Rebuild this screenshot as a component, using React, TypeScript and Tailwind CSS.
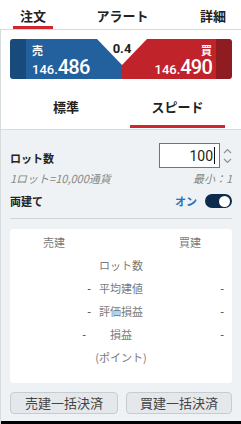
import React from "react";

const jp = "font-['Noto_Sans_CJK_JP',sans-serif]";
const num = "font-['Roboto','Noto_Sans_CJK_JP',sans-serif]";

function Chevron({ up }: { up?: boolean }) {
  return (
    <svg width="9" height="6" viewBox="0 0 9 6" fill="none">
      <path
        d={up ? "M1 5 L4.5 1.5 L8 5" : "M1 1 L4.5 4.5 L8 1"}
        stroke="#8a8f94"
        strokeWidth="1.1"
      />
    </svg>
  );
}

export default function App() {
  return (
    <div className={`w-[241px] h-[424px] bg-white overflow-hidden flex flex-col ${jp}`}>
      {/* Top tabs */}
      <div className="flex h-[30px] border-b border-[#d6dbde] shrink-0">
        <div className="ml-[13px] w-[40px] h-[29px] pt-[6px] border-b-[3px] border-[#d0262d] flex items-center justify-center text-[13px] font-bold text-[#222]">
          注文
        </div>
        <div className="ml-[45px] w-[49px] h-[29px] pt-[6px] border-b-[3px] border-transparent flex items-center justify-center text-[13px] font-bold text-[#222] whitespace-nowrap">
          アラート
        </div>
        <div className="ml-[53px] w-[26px] h-[29px] pt-[6px] border-b-[3px] border-transparent flex items-center justify-center text-[13px] font-bold text-[#222] whitespace-nowrap">
          詳細
        </div>
      </div>

      <div className="flex-1 flex flex-col border-l border-[#d6dbde]">
        {/* Price panel */}
        <div className="relative mx-[9px] mt-[9px] h-[40px] flex rounded-[3px] overflow-hidden shrink-0">
          <div className="w-[16px] bg-[#184a7c]" />
          <div className="w-[96px] bg-[#22609e] pl-[6px] pt-[4px] text-white">
            <div className="text-[11px] leading-[14px] font-bold">売</div>
            <div className={`flex items-baseline leading-[20px] ${num}`}>
              <span className="text-[13px] font-medium">146.</span>
              <span className="text-[20px] font-medium tracking-[-0.8px]">486</span>
            </div>
          </div>
          <div className="w-[94px] bg-[#c1232a] pr-[4px] pt-[4px] text-white flex flex-col items-end">
            <div className="text-[11px] leading-[14px] font-bold">買</div>
            <div className={`flex items-baseline leading-[20px] ${num}`}>
              <span className="text-[13px] font-medium">146.</span>
              <span className="text-[20px] font-medium tracking-[-0.8px]">490</span>
            </div>
          </div>
          <div className="w-[16px] bg-[#8e1c21]" />
          <svg
            className="absolute left-0 top-0"
            width="222"
            height="40"
            viewBox="0 0 222 40"
          >
            <polygon points="87,0 137,0 112,26" fill="#ffffff" />
          </svg>
          <div
            className={`absolute left-[97px] top-[2px] w-[30px] text-center text-[13px] leading-[16px] font-bold text-[#222] ${num}`}
          >
            0.4
          </div>
        </div>

        {/* Sub tabs */}
        <div className="flex h-[51px] border-b border-[#d6dbde] px-[9px] shrink-0">
          <div className="w-[112px] h-[49px] pt-[10px] border-b-[3px] border-transparent flex items-center justify-center text-[13px] font-bold text-[#222]">
            標準
          </div>
          <div className="ml-[8px] w-[95px] h-[49px] pt-[10px] border-b-[3px] border-[#d0262d] flex items-center justify-center text-[13px] font-bold text-[#222]">
            スピード
          </div>
        </div>

        {/* Form area */}
        <div className="flex-1 bg-[#eef2f4] flex flex-col px-[9px]">
          <div className="mt-[13px] flex items-center justify-between">
            <div className="pt-[5px] text-[11px] leading-[14px] font-bold text-[#222]">ロット数</div>
            <div className="flex items-center">
              <div className="w-[61px] h-[25px] bg-white border border-[#3f7fc6] flex items-center justify-end pr-[4px]">
                <span className={`text-[14px] text-[#222] leading-[18px] ${num}`}>100</span>
                <span className="w-[1px] h-[17px] bg-[#111] ml-[1px]" />
              </div>
              <div className="w-[12px] flex flex-col items-center gap-[4px] pl-[2px]">
                <Chevron up />
                <Chevron />
              </div>
            </div>
          </div>

          <div className="mt-[3px] flex justify-between text-[11px] leading-[14px] italic text-[#888]">
            <span>1ロット=10,000通貨</span>
            <span>最小：1</span>
          </div>

          <div className="mt-[9px] h-[14px] flex items-center justify-between">
            <span className="text-[11px] leading-[14px] font-bold text-[#222]">両建て</span>
            <div className="flex items-center">
              <span className="text-[11px] leading-[14px] font-bold text-[#2a6fb5] mr-[8px]">オン</span>
              <div className="w-[27px] h-[14px] rounded-full bg-[#0c2b4d] flex items-center justify-end pr-[2px]">
                <div className="w-[11px] h-[11px] rounded-full bg-white" />
              </div>
            </div>
          </div>

          <div className="mt-[10px] border-t border-[#cfd5d9]" />

          {/* Position card */}
          <div className="mt-[10px] h-[154px] bg-white rounded-[3px] pt-[2px] text-[11px] text-[#7a7a7a]">
            <div className="h-[23px] flex items-center">
              <span className="ml-[33px] w-[22px] text-center">売建</span>
              <span className="ml-[114px] w-[22px] text-center">買建</span>
            </div>
            <div className="h-[23px] flex items-center">
              <div className="w-[81px]" />
              <div className="w-[60px] text-center">ロット数</div>
            </div>
            <div className="h-[23px] flex items-center">
              <div className="w-[81px] text-right text-[#333]">-</div>
              <div className="w-[60px] text-center">平均建値</div>
              <div className="flex-1 text-right pr-[8px] text-[#333]">-</div>
            </div>
            <div className="h-[23px] flex items-center">
              <div className="w-[81px] text-right text-[#333]">-</div>
              <div className="w-[60px] text-center">評価損益</div>
              <div className="flex-1 text-right pr-[8px] text-[#333]">-</div>
            </div>
            <div className="h-[23px] flex items-center">
              <div className="w-[81px] text-right pr-[5px] text-[#333]">-</div>
              <div className="w-[60px] text-center">損益</div>
              <div className="flex-1 text-right pr-[8px] text-[#333]">-</div>
            </div>
            <div className="h-[23px] flex items-center">
              <div className="w-[81px]" />
              <div className="w-[60px] text-center whitespace-nowrap">(ポイント)</div>
            </div>
          </div>

          {/* Buttons */}
          <div className="mt-[9px] flex justify-between">
            <div className="w-[108px] h-[22px] rounded-[4px] bg-[#e5e8ea] border border-[#c7ccd0] flex items-center justify-center text-[13px] text-[#444]">
              売建一括決済
            </div>
            <div className="w-[106px] h-[22px] rounded-[4px] bg-[#e5e8ea] border border-[#c7ccd0] flex items-center justify-center text-[13px] text-[#444]">
              買建一括決済
            </div>
          </div>
        </div>
        <div className="h-[3px] bg-black shrink-0" />
      </div>
    </div>
  );
}
